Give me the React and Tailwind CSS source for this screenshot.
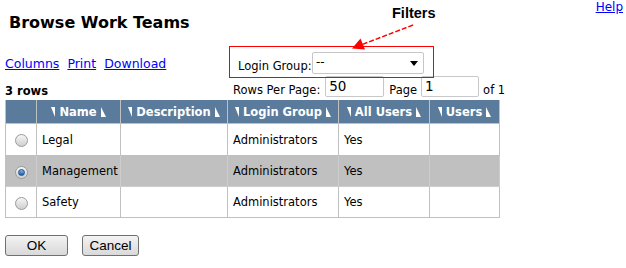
import React from "react";

const TriL = () => (
  <svg width="4" height="10" viewBox="0 0 4 10" className="shrink-0">
    <polygon points="0,0 4,0 4,10" fill="white" />
  </svg>
);
const TriR = () => (
  <svg width="5" height="10" viewBox="0 0 5 10" className="shrink-0">
    <polygon points="0,0 0,10 5,10" fill="white" />
  </svg>
);

const Radio = ({ checked }) => (
  <div className="w-[13px] h-[13px] rounded-full border border-[#9a9a9a] bg-linear-to-b from-[#f6f6f6] to-[#cfcfcf] flex items-center justify-center">
    {checked && (
      <div className="w-[7px] h-[7px] rounded-full bg-linear-to-b from-[#7ab8ec] to-[#1d5fa6] border border-[#1b4f8a]" />
    )}
  </div>
);

const HeadCell = ({ label }) => (
  <div className="h-[24px] border-r border-b border-[#c0c0c0] bg-[#5a7b9c] flex items-center justify-center gap-[4px] text-white font-bold text-[11.5px] leading-[14px]">
    {label && (
      <>
        <TriL />
        <span>{label}</span>
        <TriR />
      </>
    )}
  </div>
);

const rows = [
  { name: "Legal", group: "Administrators", all: "Yes", sel: false, h: "h-[32px]" },
  { name: "Management", group: "Administrators", all: "Yes", sel: true, h: "h-[31px]" },
  { name: "Safety", group: "Administrators", all: "Yes", sel: false, h: "h-[31px]" },
];

export default function App() {
  return (
    <div
      className="relative w-[626px] h-[268px] bg-white overflow-hidden text-black"
      style={{ fontFamily: '"DejaVu Sans", Verdana, sans-serif' }}
    >
      {/* Title row */}
      <div className="flex justify-between items-start">
        <h1 className="ml-[9px] mt-[13px] text-[16px] leading-[20px] font-bold">Browse Work Teams</h1>
        <a className="mr-[3px] text-[12px] leading-[14px] text-[#0000ff] underline">Help</a>
      </div>

      {/* Links + login group */}
      <div className="flex items-start h-[22px] mt-[19px]">
        <div className="w-[238px] pl-[5px] pt-[4px] flex gap-[8px] text-[12.5px] leading-[15px] text-[#0000ff]">
          <a className="underline">Columns</a>
          <a className="underline">Print</a>
          <a className="underline">Download</a>
        </div>
        <span className="mt-[7px] text-[11.5px] leading-[14px] w-[74px] whitespace-nowrap">Login Group:</span>
        <div className="w-[112px] h-[22px] border border-[#c6c6c6] rounded-[2px] bg-white flex items-center justify-between pl-[3px] pr-[5px]">
          <span className="text-[12px] leading-[14px] -mt-[2px]">--</span>
          <svg width="8" height="5" viewBox="0 0 8 5">
            <polygon points="0,0 8,0 4,5" fill="black" />
          </svg>
        </div>
      </div>

      {/* rows info + paging */}
      <div className="flex items-start h-[24px] mt-[2px]">
        <div className="w-[228px] pl-[5px] pt-[8px] text-[11.5px] leading-[14px] font-bold">3 rows</div>
        <span className="ml-[5px] mt-[7px] text-[11.5px] leading-[14px] whitespace-nowrap">Rows Per Page:</span>
        <div className="ml-[5px] w-[59px] h-[21px] border border-[#c8c8c8] rounded-[2px] pl-[3px] text-[13.5px] leading-[19px]">50</div>
        <span className="ml-[5px] mt-[7px] text-[11.5px] leading-[14px]">Page</span>
        <div className="ml-[4px] w-[58px] h-[21px] border border-[#c8c8c8] rounded-[2px] pl-[3px] text-[13.5px] leading-[19px]">1</div>
        <span className="ml-[4px] mt-[7px] text-[11.5px] leading-[14px]">of 1</span>
      </div>

      {/* Table */}
      <div className="ml-[5px] w-fit grid grid-cols-[31px_84px_107px_111px_91px_70px] border-l border-[#c0c0c0] text-[11.5px] leading-[14px]">
        <HeadCell />
        <HeadCell label="Name" />
        <HeadCell label="Description" />
        <HeadCell label="Login Group" />
        <HeadCell label="All Users" />
        <HeadCell label="Users" />
        {rows.map((r) => {
          const bg = r.sel ? "bg-[#c0c0c0]" : "bg-white";
          const bd = r.sel ? "border-[#cdcdcd]" : "border-[#c0c0c0]";
          const cell = `${r.h} ${bg} border-r border-b ${bd} flex items-center`;
          return (
            <React.Fragment key={r.name}>
              <div className={`${cell} justify-center pt-[2px]`}>
                <Radio checked={r.sel} />
              </div>
              <div className={`${cell} pl-[5px]`}>{r.name}</div>
              <div className={cell}></div>
              <div className={`${cell} pl-[5px]`}>{r.group}</div>
              <div className={`${cell} pl-[5px]`}>{r.all}</div>
              <div className={cell}></div>
            </React.Fragment>
          );
        })}
      </div>

      {/* Buttons */}
      <div
        className="flex gap-[14px] ml-[5px] mt-[17px]"
        style={{ fontFamily: '"Liberation Sans", Arial, sans-serif' }}
      >
        <button className="w-[63px] h-[21px] border border-[#707070] rounded-[3px] bg-linear-to-b from-[#f3f3f3] to-[#d9d9d9] text-[13.5px] leading-[16px]">
          OK
        </button>
        <button className="w-[57px] h-[21px] border border-[#707070] rounded-[3px] bg-linear-to-b from-[#f3f3f3] to-[#d9d9d9] text-[13.5px] leading-[16px]">
          Cancel
        </button>
      </div>

      {/* Annotation overlay */}
      <div className="absolute left-[229px] top-[46px] w-[205px] h-[32px] border border-[#f00] pointer-events-none" />
      <div
        className="absolute left-[392px] top-[6px] text-[14.5px] leading-none font-bold"
        style={{ fontFamily: '"Liberation Sans", Arial, sans-serif' }}
      >
        Filters
      </div>
      <svg className="absolute left-[348px] top-[20px]" width="70" height="32" viewBox="0 0 70 32">
        <line x1="65" y1="5" x2="14" y2="24.5" stroke="#f00" strokeWidth="1.4" strokeDasharray="5 2" />
        <polygon points="4,28.5 17,29.5 12.5,18.5" fill="#f00" />
      </svg>
    </div>
  );
}
